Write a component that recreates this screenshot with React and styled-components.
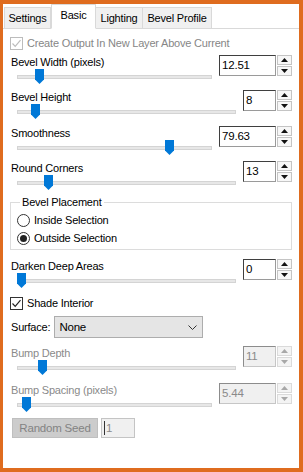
import React from 'react'
import styled, { createGlobalStyle } from 'styled-components'

const GlobalStyle = createGlobalStyle`
  html, body {
    margin: 0;
    padding: 0;
    background: #fff;
  }
  body {
    font-family: "Liberation Sans", Arial, sans-serif;
    font-size: 11px;
    letter-spacing: -0.2px;
    color: #000;
  }
  * { box-sizing: border-box; }
`

const Frame = styled.div`
  width: 303px;
  height: 472px;
  border: 4px solid #df6c1f;
  border-left-width: 3px;
  background: #fff;
  display: flex;
  flex-direction: column;
  overflow: hidden;
`

const TabStrip = styled.div`
  display: flex;
  align-items: flex-end;
  height: 25px;
  padding-left: 1px;
  border-bottom: 1px solid #d9d9d9;
`

const Tab = styled.div`
  width: ${({ $w }) => $w}px;
  height: ${({ $active }) => ($active ? 25 : 21)}px;
  margin-bottom: ${({ $active }) => ($active ? -1 : 0)}px;
  padding-bottom: ${({ $active }) => ($active ? 4 : 0)}px;
  display: flex;
  align-items: center;
  justify-content: center;
  background: ${({ $active }) => ($active ? '#fff' : '#f0f0f0')};
  border: 1px solid #d9d9d9;
  border-bottom: ${({ $active }) => ($active ? '1px solid #fff' : 'none')};
  border-left-width: ${({ $first, $active }) => ($first || $active ? 1 : 0)}px;
  white-space: nowrap;
`

const Body = styled.div`
  flex: 1;
  display: flex;
  flex-direction: column;
  padding: 6px 7px 0 7px;
`

const CheckRow = styled.label`
  display: flex;
  align-items: center;
  gap: 4px;
  height: 16px;
  margin-top: ${({ $gap }) => $gap || 0}px;
  color: ${({ $disabled }) => ($disabled ? '#868686' : '#000')};
  white-space: nowrap;
`

const CheckBox = styled.span`
  width: 13px;
  height: 13px;
  border: 1px solid ${({ $disabled }) => ($disabled ? '#bcbcbc' : '#333')};
  background: #fff;
  display: flex;
  align-items: center;
  justify-content: center;
  flex: none;
`

const Block = styled.div`
  display: grid;
  grid-template-columns: 1fr auto;
  grid-template-rows: 14px 21px;
  column-gap: 7px;
  margin-top: ${({ $gap }) => $gap || 0}px;
`

const Label = styled.div`
  grid-column: 1;
  grid-row: 1;
  padding-left: 1px;
  padding-top: 1px;
  line-height: 13px;
  white-space: nowrap;
  color: ${({ $disabled }) => ($disabled ? '#8a8a8a' : '#000')};
`

const TrackArea = styled.div`
  grid-column: 1;
  grid-row: 2;
  position: relative;
  margin-left: 7px;
`

const Track = styled.div`
  margin-top: 6px;
  height: 4px;
  background: #e7e7e7;
  border: 1px solid #d4d4d4;
`

const Thumb = styled.svg`
  position: absolute;
  top: 0;
  display: block;
`

const Spin = styled.div`
  grid-column: 2;
  grid-row: 1 / span 2;
  align-self: start;
  display: flex;
  height: 21px;
`

const SpinField = styled.div`
  width: ${({ $w }) => $w}px;
  height: 21px;
  border: 1px solid;
  border-color: ${({ $disabled }) =>
    $disabled ? '#8c8c8c #c6c6c6 #c6c6c6 #8c8c8c' : '#3f3f3f #9a9a9a #9a9a9a #3f3f3f'};
  background: ${({ $disabled }) => ($disabled ? '#f0f0f0' : '#fff')};
  color: ${({ $disabled }) => ($disabled ? '#8a8a8a' : '#000')};
  font-size: 11.5px;
  line-height: 19px;
  padding-left: 2px;
`

const SpinButtons = styled.div`
  width: 16px;
  display: flex;
  flex-direction: column;
  gap: 1px;
  padding-left: 1px;
`

const SpinButton = styled.div`
  flex: 1;
  border: 1px solid ${({ $disabled }) => ($disabled ? '#dadada' : '#c4c4c4')};
  background: ${({ $disabled }) => ($disabled ? '#f4f4f4' : '#f7f7f7')};
  display: flex;
  align-items: center;
  justify-content: center;
`

const GroupBox = styled.fieldset`
  margin: 0;
  padding: 0 0 2px 6px;
  border: 1px solid #dcdcdc;
  min-width: 0;
`

const Legend = styled.legend`
  margin-left: 3px;
  padding: 0 2px;
  line-height: 13px;
`

const RadioRow = styled.label`
  display: flex;
  align-items: center;
  gap: 4px;
  height: 18px;
  margin-top: ${({ $gap }) => $gap || 0}px;
`

const RadioDot = styled.span`
  width: 13px;
  height: 13px;
  border-radius: 50%;
  border: 1px solid #333;
  background: #fff;
  display: flex;
  align-items: center;
  justify-content: center;
  &::after {
    content: '';
    width: 7px;
    height: 7px;
    border-radius: 50%;
    background: ${({ $on }) => ($on ? '#222' : 'transparent')};
  }
`

const SurfaceRow = styled.div`
  display: flex;
  align-items: center;
  gap: 4px;
  margin-top: 5px;
  padding-left: 1px;
`

const Select = styled.div`
  width: 149px;
  height: 22px;
  background: #e5e5e5;
  border: 1px solid #adadad;
  display: flex;
  align-items: center;
  justify-content: space-between;
  padding: 0 5px 0 4px;
  font-size: 11.5px;
`

const SeedRow = styled.div`
  display: flex;
  gap: 3px;
  margin-top: 0;
  padding-left: 2px;
`

const SeedButton = styled.div`
  width: 86px;
  height: 20px;
  background: #cccccc;
  border: 1px solid #bfbfbf;
  color: #838383;
  display: flex;
  align-items: center;
  justify-content: center;
  font-size: 11.5px;
`

const SeedField = styled.div`
  width: 34px;
  height: 20px;
  border: 1px solid #c4c4c4;
  background: #f0f0f0;
  color: #8a8a8a;
  display: flex;
  align-items: center;
  padding-left: 2px;
  font-size: 11.5px;
`

const Caret = styled.span`
  width: 1px;
  height: 14px;
  background: #333;
  margin-right: 1px;
`

const Check = ({ color }) => (
  <svg width='11' height='11' viewBox='0 0 11 11'>
    <path d='M1.5 5.5 L4.2 8.3 L9.5 2.2' fill='none' stroke={color} strokeWidth='1.2' />
  </svg>
)

const Arrow = ({ up, disabled }) => (
  <svg width='7' height='4' viewBox='0 0 7 4'>
    <path d={up ? 'M0 4 L3.5 0 L7 4 Z' : 'M0 0 L3.5 4 L7 0 Z'} fill={disabled ? '#a8a8a8' : '#111'} />
  </svg>
)

const Slider = ({ label, value, at, wide, disabled, gap }) => (
  <Block $gap={gap}>
    <Label $disabled={disabled}>{label}</Label>
    <TrackArea>
      <Track />
      <Thumb width='9' height='15' viewBox='0 0 9 15' style={{ left: at }}>
        <path d='M0 0 H9 V10.5 L4.5 15 L0 10.5 Z' fill='#0078d7' />
      </Thumb>
    </TrackArea>
    <Spin>
      <SpinField $w={wide ? 57 : 33} $disabled={disabled}>{value}</SpinField>
      <SpinButtons>
        <SpinButton $disabled={disabled}><Arrow up disabled={disabled} /></SpinButton>
        <SpinButton $disabled={disabled}><Arrow disabled={disabled} /></SpinButton>
      </SpinButtons>
    </Spin>
  </Block>
)

const tabs = [
  { name: 'Settings', w: 47 },
  { name: 'Basic', w: 45, active: true },
  { name: 'Lighting', w: 47 },
  { name: 'Bevel Profile', w: 69 }
]

const App = () => (
  <Frame>
    <GlobalStyle />
    <TabStrip>
      {tabs.map((t, i) => (
        <Tab key={t.name} $w={t.w} $active={t.active} $first={i === 0}>{t.name}</Tab>
      ))}
    </TabStrip>
    <Body>
      <CheckRow $disabled>
        <CheckBox $disabled><Check color='#bcbcbc' /></CheckBox>
        Create Output In New Layer Above Current
      </CheckRow>
      <Slider gap={4} label='Bevel Width (pixels)' value='12.51' at={18} wide />
      <Slider label='Bevel Height' value='8' at={14} />
      <Slider gap={1} label='Smoothness' value='79.63' at={148} wide />
      <Slider label='Round Corners' value='13' at={27} />
      <GroupBox>
        <Legend>Bevel Placement</Legend>
        <RadioRow $gap={2}><RadioDot />Inside Selection</RadioRow>
        <RadioRow><RadioDot $on />Outside Selection</RadioRow>
      </GroupBox>
      <Slider gap={9} label='Darken Deep Areas' value='0' at={0} />
      <CheckRow $gap={1}>
        <CheckBox><Check color='#222' /></CheckBox>
        Shade Interior
      </CheckRow>
      <SurfaceRow>
        Surface:
        <Select>
          None
          <svg width='9' height='5' viewBox='0 0 9 5'>
            <path d='M0.5 0.5 L4.5 4.5 L8.5 0.5' fill='none' stroke='#333' strokeWidth='1' />
          </svg>
        </Select>
      </SurfaceRow>
      <Slider gap={8} label='Bump Depth' value='11' at={21} disabled />
      <Slider gap={2} label='Bump Spacing (pixels)' value='5.44' at={5} wide disabled />
      <SeedRow>
        <SeedButton>Random Seed</SeedButton>
        <SeedField><Caret />1</SeedField>
      </SeedRow>
    </Body>
  </Frame>
)

export default App
